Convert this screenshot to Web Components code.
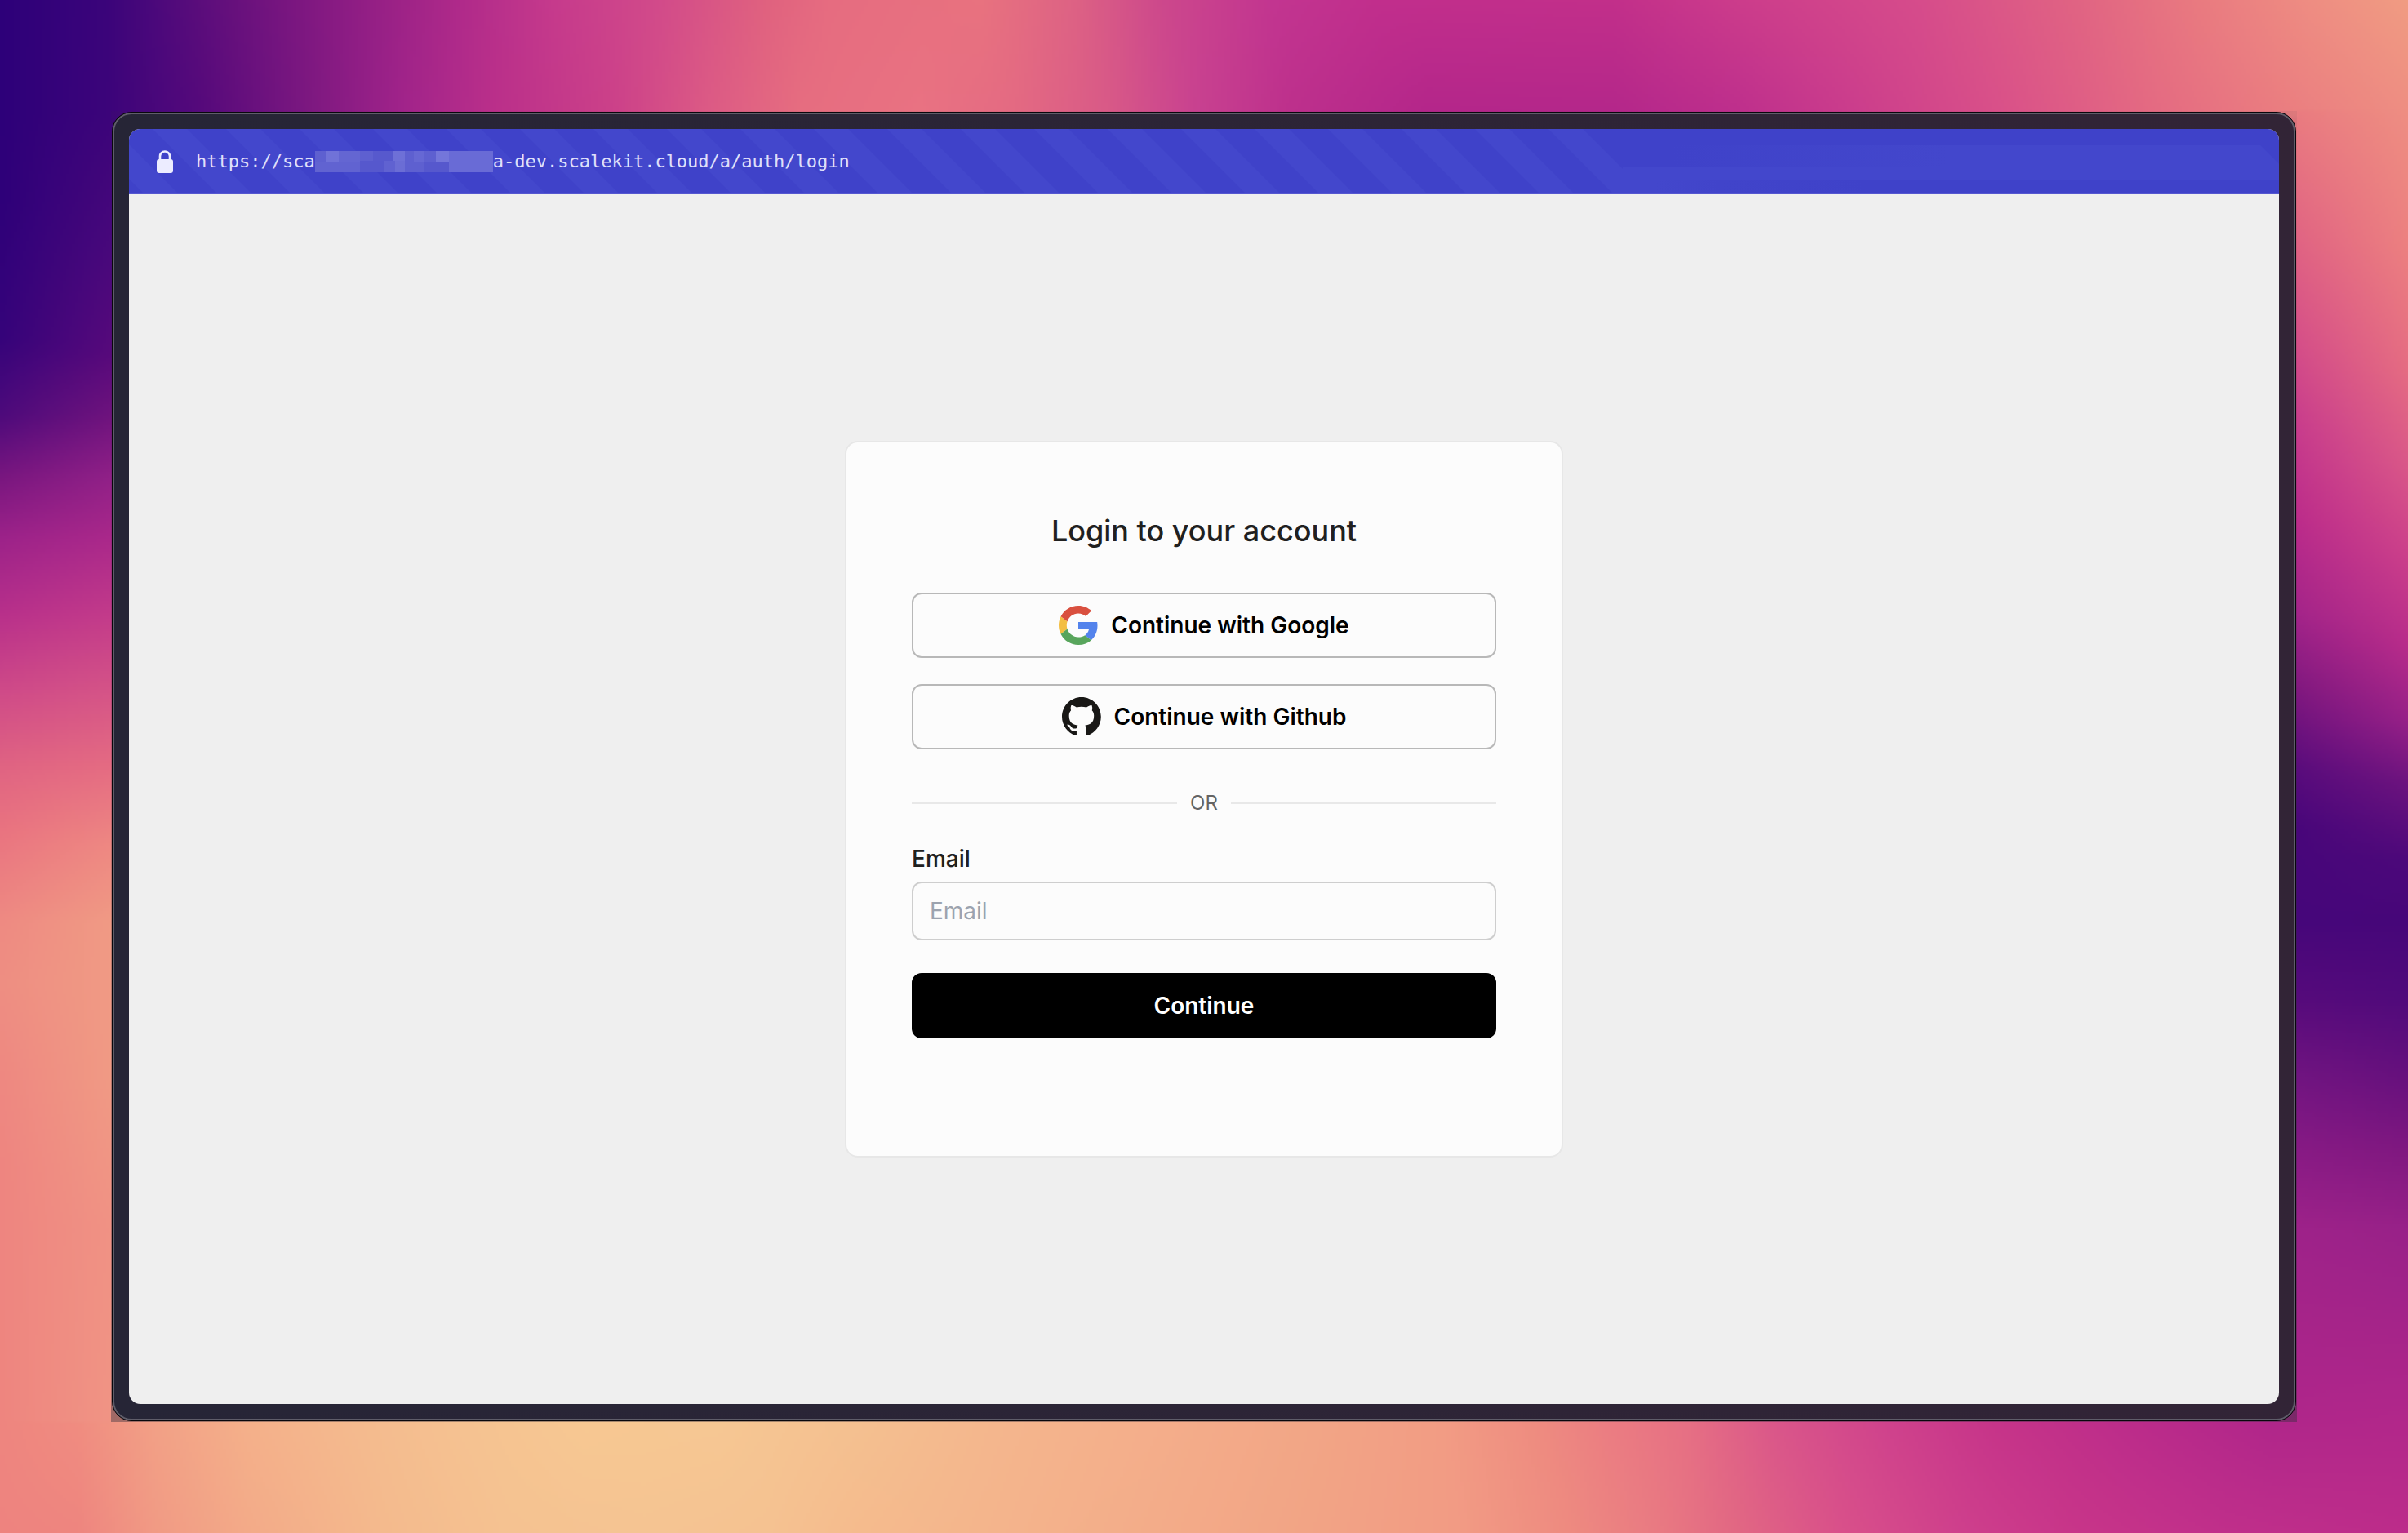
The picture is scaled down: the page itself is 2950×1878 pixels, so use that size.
<!DOCTYPE html>
<html lang="en">
<head>
<meta charset="utf-8">
<title>Login</title>
<style>
  html, body { margin: 0; height: 100%; }
  body { font-family: Inter, "Liberation Sans", sans-serif; background: #b2278a; }
</style>
</head>
<body>
<desktop-wallpaper>
  <browser-window>
    <address-bar slot="bar"></address-bar>
    <login-card>
      <provider-button>
        <svg slot="icon" width="48" height="48" viewBox="0 0 48 48" aria-hidden="true">
          <path fill="#d9503f" d="M24 9.5c3.54 0 6.71 1.22 9.21 3.6l6.85-6.85C35.9 2.38 30.47 0 24 0 14.62 0 6.51 5.38 2.56 13.22l7.98 6.19C12.43 13.72 17.74 9.5 24 9.5z"/>
          <path fill="#5383ec" d="M47.500 24.55c0-1.57-.15-3.09-.38-4.55H24v9.02h12.94c-.58 2.96-2.26 5.48-4.78 7.18l7.73 6c4.51-4.18 7.61-10.36 7.61-17.65z"/>
          <path fill="#f3be42" d="M10.53 28.59c-.48-1.45-.76-2.99-.76-4.59s.27-3.14.76-4.59l-7.98-6.19C.92 16.46 0 20.12 0 24c0 3.88.92 7.54 2.56 10.78l7.97-6.19z"/>
          <path fill="#58a55c" d="M24 48c6.48 0 11.93-2.13 15.89-5.81l-7.73-6c-2.15 1.45-4.92 2.3-8.16 2.3-6.26 0-11.57-4.22-13.47-9.91l-7.98 6.19C6.51 42.62 14.62 48 24 48z"/>
        </svg>
        Continue with Google
      </provider-button>
      <provider-button>
        <svg slot="icon" width="48" height="48" viewBox="0 0 98 98" aria-hidden="true">
          <path fill="#191816" fill-rule="evenodd" d="M48.854 0C21.839 0 0 22 0 49.217c0 21.756 13.993 40.172 33.405 46.69 2.427.49 3.316-1.059 3.316-2.362 0-1.141-.08-5.052-.08-9.127-13.59 2.934-16.42-5.867-16.42-5.867-2.184-5.704-5.42-7.17-5.42-7.17-4.448-3.015.324-3.015.324-3.015 4.934.326 7.523 5.052 7.523 5.052 4.367 7.496 11.404 5.378 14.235 4.074.404-3.178 1.699-5.378 3.074-6.6-10.839-1.141-22.243-5.378-22.243-24.283 0-5.378 1.94-9.778 5.014-13.2-.485-1.222-2.184-6.275.486-13.038 0 0 4.125-1.304 13.426 5.052a46.97 46.97 0 0 1 12.214-1.63c4.125 0 8.33.571 12.213 1.63 9.302-6.356 13.427-5.052 13.427-5.052 2.67 6.763.97 11.816.485 13.038 3.155 3.422 5.015 7.822 5.015 13.2 0 18.905-11.404 23.06-22.324 24.283 1.78 1.548 3.316 4.481 3.316 9.126 0 6.6-.08 11.897-.08 13.526 0 1.304.89 2.853 3.316 2.364 19.412-6.52 33.405-24.935 33.405-46.691C97.707 22 75.788 0 48.854 0z"/>
        </svg>
        Continue with Github
      </provider-button>
      <or-divider>OR</or-divider>
      <email-field></email-field>
      <submit-button>Continue</submit-button>
    </login-card>
  </browser-window>
</desktop-wallpaper>

<script>
const define = (name, html, ready) => {
  const tpl = document.createElement('template');
  tpl.innerHTML = html;
  customElements.define(name, class extends HTMLElement {
    constructor() {
      super();
      this.attachShadow({ mode: 'open' }).append(tpl.content.cloneNode(true));
    }
    connectedCallback() { if (ready) ready(this.shadowRoot); }
  });
};

// Wallpaper colours along each side: position, colour. The space between two rows is blended.
const WALL = {
  top: [
    '0 2d0079 70 3b047a 150 66107c 220 8a1b83 300 b02a8a 360 c63a8c 430 d24b8a 500 e0627f 540 e66c80 640 e8727f 700 dd6284 760 cc478c 830 c23590 900 c12e8c 1050 c22f8a 1130 cc3c8b 1250 d64c8b 1350 e06383 1430 e97a80 1500 ee8c82 1568 f09c82',
    '0 2d0079 70 3c047a 130 55097b 200 7c1880 260 a0238a 320 ba2f8a 400 cc4189 460 dc5a85 520 e66d80 600 e97282 660 e46a82 720 d95a87 780 c84190 840 bd308c 930 b4268a 1050 b4278a 1130 be2f8c 1200 ca3c8c 1300 d95089 1400 e46a82 1480 ea7c80 1568 ee8e82'],
  bottom: [
    '0 ee857f 50 f08c80 100 f2a086 160 f4b08a 230 f4ba8e 300 f5c291 380 f7c892 470 f6c793 560 f4c090 650 f4b68d 750 f4ae8b 850 f2a686 940 f29c84 1000 ee8c80 1050 eb7c82 1100 e66f84 1160 d9558a 1230 cf428c 1300 c63489 1400 ba2b8a 1480 b0268a 1568 b2278a',
    '0 ee837f 50 ee857f 100 f19a84 160 f3aa88 250 f4ba8d 330 f5c291 420 f5c492 500 f5c291 560 f5bb8d 650 f4b48c 750 f3ac89 850 f2a485 950 f29b84 1020 ee8b80 1080 e97a82 1130 e26883 1200 d9508a 1280 ce3f8c 1350 c83589 1450 c02f8a 1568 bc2c8a'],
  left: [
    '72 2d0079 130 2e0079 220 35037a 270 4d0a7b 310 78167f 350 9c2289 400 b8308a 450 cf4a88 500 e06482 540 e97380 600 ee8a82 640 ee8e82 700 ee8881 760 ee8580 926 ee857f',
    '72 3c047a 160 48087b 230 57097b 270 6e137d 310 902087 350 aa288a 400 c33b8a 450 d55487 500 e56c82 550 ee8882 600 f09a84 700 f09a84 800 f09284 926 f09484'],
  right: [
    '72 ea7c80 160 e06383 220 d65088 280 c83c8c 340 bc2c8a 400 a42489 450 80187f 500 5a0c7c 540 48067a 600 46067a 650 560a7b 700 701480 750 881a84 800 9e2289 926 b0268a',
    '72 ee8e82 160 ec8080 240 e56c82 300 da5888 360 cc408a 420 b82c8a 470 962087 510 6c137e 560 4c087a 600 460679 650 500a7b 700 66107d 750 801880 800 982188 926 b2278a']
};
const parse = s => {
  const t = s.split(' '), out = [];
  for (let i = 0; i < t.length; i += 2) {
    const n = parseInt(t[i + 1], 16);
    out.push([+t[i], n >> 16, n >> 8 & 255, n & 255]);
  }
  return out;
};
const at = (stops, p) => {
  let i = 0;
  while (i < stops.length - 2 && p > stops[i + 1][0]) i++;
  const a = stops[i], b = stops[i + 1];
  const t = Math.min(1, Math.max(0, (p - a[0]) / (b[0] - a[0])));
  return [1, 2, 3].map(k => a[k] + (b[k] - a[k]) * t);
};
const mix = (pair, p, t) => {
  const a = at(pair[0], p), b = at(pair[1], p);
  return a.map((v, k) => v + (b[k] - v) * t);
};

define('desktop-wallpaper', `
  <style>
    :host { display: flex; position: relative; box-sizing: border-box; min-height: 100%; padding: 136px; }
    canvas { position: absolute; inset: 0; width: 100%; height: 100%; z-index: -1; }
  </style>
  <canvas width="784" height="499" aria-hidden="true"></canvas>
  <slot></slot>`, root => {
  const c = root.querySelector('canvas'), g = c.getContext('2d');
  const img = g.createImageData(784, 499);
  const s = {};
  for (const k in WALL) s[k] = WALL[k].map(parse);
  for (let j = 0; j < 499; j++) for (let i = 0; i < 784; i++) {
    const x = i * 2 + 1, y = j * 2 + 1;
    let v;
    if (y < 76 && x > 72 && x < 1496 || y < 72) v = mix(s.top, x, Math.min(1, y / 72));
    else if (y > 922 && x > 72 && x < 1496 || y > 926) v = mix(s.bottom, x, Math.max(0, (y - 926) / 72));
    else if (x < 784) v = mix(s.left, y, Math.min(1, x / 72));
    else v = mix(s.right, y, Math.max(0, (x - 1496) / 72));
    const o = (j * 784 + i) * 4;
    img.data[o] = v[0]; img.data[o + 1] = v[1]; img.data[o + 2] = v[2]; img.data[o + 3] = 255;
  }
  g.putImageData(img, 0, 0);
});

define('browser-window', `
  <style>
    :host { display: flex; flex: 1; min-width: 0; padding: 1px; background: linear-gradient(rgba(60,50,70,.08), rgba(50,45,60,.42)); }
    .frame { flex: 1; display: flex; min-width: 0; padding: 20px; border: 1px solid #08070c; border-radius: 24px;
      background: linear-gradient(90deg, #262536, #322436); box-shadow: inset 0 0 0 2px #5f5d69; }
    .screen { flex: 1; display: flex; flex-direction: column; min-width: 0; overflow: hidden; border-radius: 14px; background: #efefef; }
    main { flex: 1; display: flex; align-items: center; justify-content: center; }
  </style>
  <div class="frame"><div class="screen"><slot name="bar"></slot><main><slot></slot></main></div></div>`);

define('address-bar', `
  <style>
    :host { display: grid; grid-template-columns: minmax(0, 1fr); height: 80px; box-sizing: border-box; background: #3f42c9; color: #e0e0fa; }
    .stripes, .row, .sheen { grid-area: 1 / 1; }
    .stripes { width: 100%; height: 80px; }
    .sheen { margin-left: 1830px; clip-path: polygon(0 0, calc(100% - 43px) 0, 100% 43px, 100% 100%, 0 100%);
      background:
        linear-gradient(#4347cc, #4347cc) 0 47px / 100% 15px no-repeat,
        linear-gradient(90deg, rgba(67,71,204,0) 60px, #4347cc 400px) 0 20px / 100% 27px no-repeat,
        linear-gradient(90deg, #4347cc 40px, #4144ca 120px, #3f42c9 300px) 0 62px / 100% 18px no-repeat; }
    .row { display: flex; align-items: center; padding: 2px 0 0 34px; border-bottom: 2px solid #5557d0; z-index: 1; }
    .lock { margin-right: 28px; }
    .url { display: flex; align-items: center; font: 22px/30px "DejaVu Sans Mono", monospace; }
  </style>
  <svg class="stripes" aria-hidden="true">
    <defs>
      <pattern id="band" width="90" height="80" patternUnits="userSpaceOnUse">
        <path d="M29 0h42l80 80h-42zM-61 0h42l80 80h-42z" fill="#4347cc"/>
      </pattern>
    </defs>
    <path d="M0 0H1783L1830 47V80H0Z" fill="url(#band)"/>
  </svg>
  <div class="sheen"></div>
  <div class="row">
    <svg class="lock" width="20" height="28" viewBox="0 0 20 28" aria-hidden="true">
      <path d="M4 13V7.500a6 6 0 0 1 12 0V13" fill="none" stroke="#ececff" stroke-width="2.600"/>
      <rect x="0" y="11" width="20" height="17" rx="3" fill="#ececff"/>
    </svg>
    <div class="url">
      <span>https://sca</span>
      <svg width="218" height="26" viewBox="0 0 222 26" preserveAspectRatio="none" aria-hidden="true" shape-rendering="crispEdges">
        <rect width="222" height="26" fill="#5e60d0"/>
        <rect x="13" width="17" height="14" fill="#7072d8"/>
        <rect x="30" width="26" height="14" fill="#6466d2"/>
        <rect x="0" y="14" width="56" height="12" fill="#6163d1"/>
        <rect x="56" y="12" width="30" height="14" fill="#5658cd"/>
        <rect x="72" width="25" height="12" fill="#5759cd"/>
        <rect x="97" width="15" height="14" fill="#6e70d7"/>
        <rect x="86" y="12" width="14" height="14" fill="#6062d1"/>
        <rect x="100" y="12" width="12" height="14" fill="#6b6dd5"/>
        <rect x="123" width="12" height="14" fill="#6668d4"/>
        <rect x="135" y="14" width="32" height="12" fill="#5658cd"/>
        <rect x="151" width="16" height="14" fill="#7476da"/>
        <rect x="167" width="55" height="26" fill="#696bd6"/>
      </svg>
      <span>a-dev.scalekit.cloud/a/auth/login</span>
    </div>
  </div>`);

define('login-card', `
  <style>
    :host { display: block; box-sizing: border-box; width: 880px; max-width: 100%; padding: 86px 80px 144px;
      border: 2px solid #e7e7e7; border-radius: 16px; background: #fcfcfc; }
    h1 { margin: 0 0 54px; font-size: 36px; line-height: 44px; font-weight: 500; text-align: center; color: #202020; }
    form { display: flex; flex-direction: column; gap: 32px; }
  </style>
  <h1>Login to your account</h1>
  <form><slot></slot></form>`);

define('provider-button', `
  <style>
    :host { display: block; }
    button { display: flex; align-items: center; justify-content: center; gap: 16px; width: 100%; height: 80px; padding: 0;
      border: 2px solid #b8b8b8; border-radius: 12px; background: transparent; color: #000; font: inherit;
      font-size: 28px; line-height: 36px; font-weight: 600; }
  </style>
  <button type="button"><slot name="icon"></slot><span><slot></slot></span></button>`);

define('or-divider', `
  <style>
    :host { display: flex; align-items: center; gap: 16px; padding: 18px 0 2px; font-size: 24px; line-height: 32px; color: #646464; }
    i { flex: 1; height: 2px; background: #e8e8e8; }
  </style>
  <i></i><slot></slot><i></i>`);

define('email-field', `
  <style>
    :host { display: flex; flex-direction: column; gap: 10px; margin-bottom: 8px; }
    label { font-size: 28px; line-height: 36px; font-weight: 500; color: #202020; }
    input { box-sizing: border-box; width: 100%; height: 72px; padding: 0 20px; border: 2px solid #cecece; border-radius: 12px;
      background: transparent; font: inherit; font-size: 28px; color: #202020; }
    input::placeholder { color: #9ca3af; opacity: 1; }
  </style>
  <label for="email">Email</label>
  <input id="email" type="email" placeholder="Email">`);

define('submit-button', `
  <style>
    :host { display: block; }
    button { width: 100%; height: 80px; padding: 0; border: 0; border-radius: 12px; background: #000; color: #fff; font: inherit;
      font-size: 28px; line-height: 36px; font-weight: 600; }
  </style>
  <button type="submit"><slot></slot></button>`);

// The wallpaper fills the window from its parent's full height.
document.querySelector('desktop-wallpaper').style.minHeight = '100vh';
</script>
</body>
</html>
